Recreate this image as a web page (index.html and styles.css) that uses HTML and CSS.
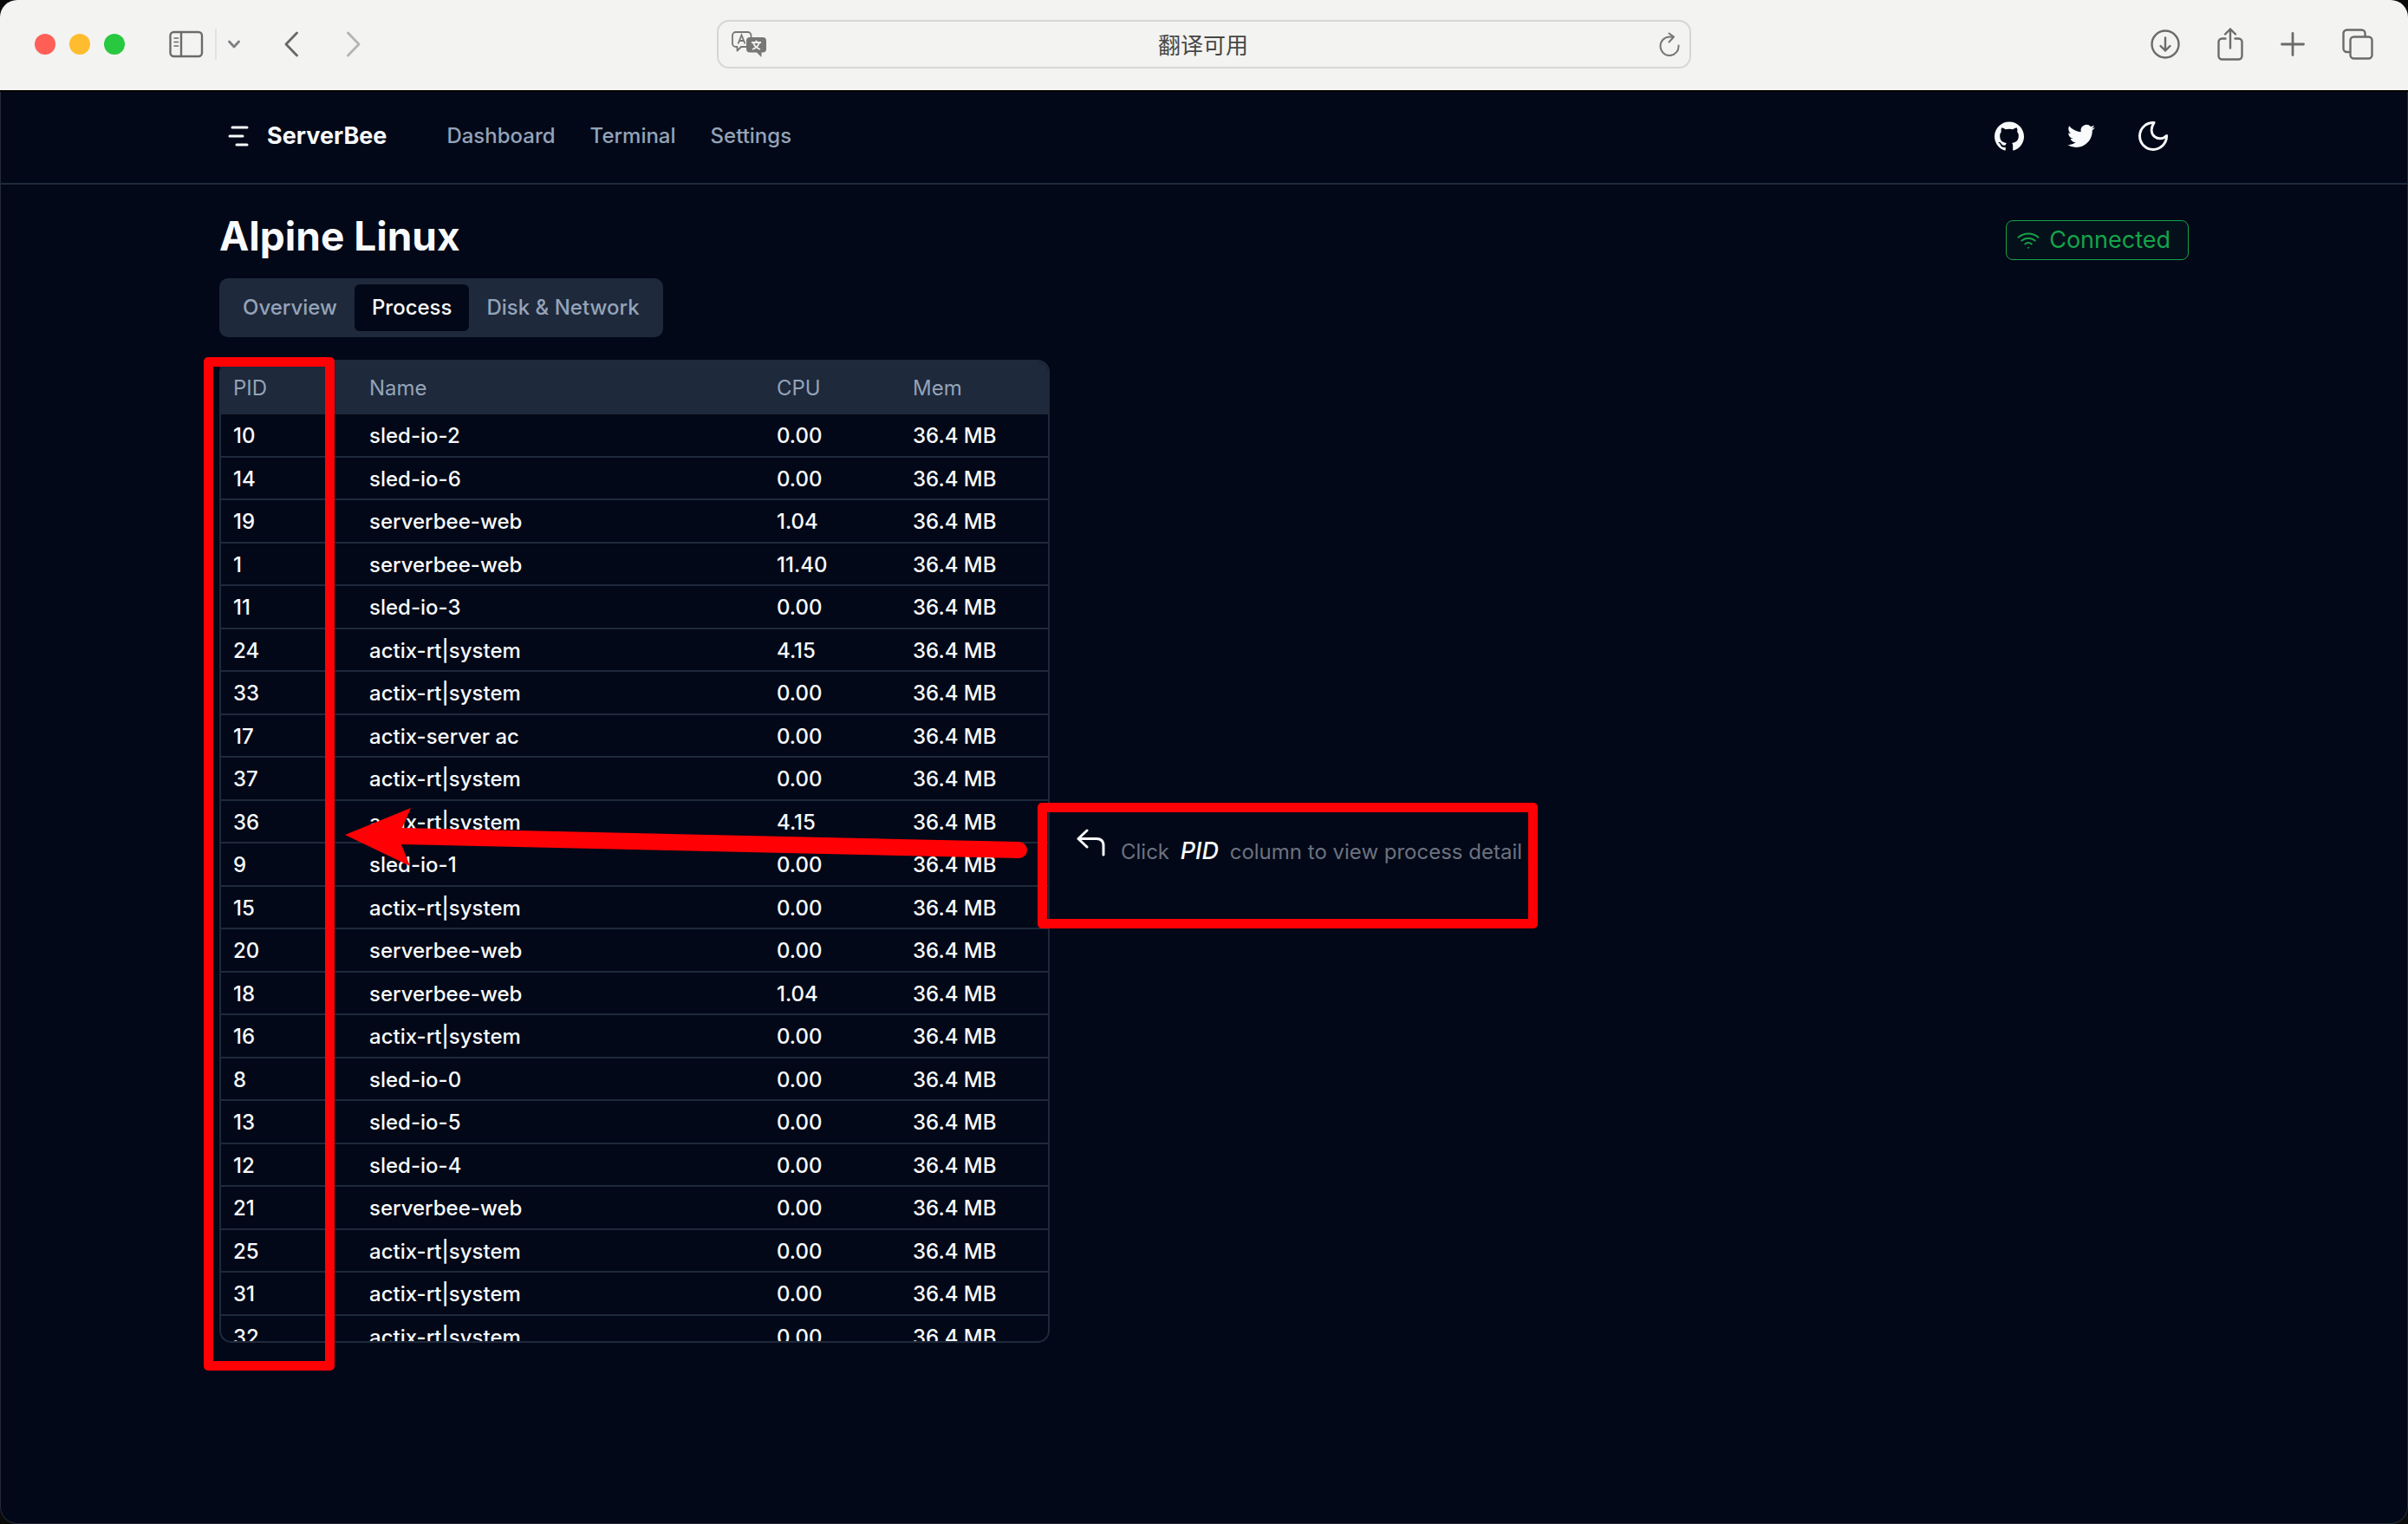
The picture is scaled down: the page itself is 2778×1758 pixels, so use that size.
FILE: index.html
```html
<!DOCTYPE html>
<html lang="en">
<head>
<meta charset="utf-8">
<title>ServerBee</title>
<link rel="stylesheet" href="styles.css">
</head>
<body>
<div class="window">
  <header class="toolbar">
    <div class="toolbar-start">
      <div class="lights">
        <button class="light light-close" aria-label="Close"></button>
        <button class="light light-min" aria-label="Minimize"></button>
        <button class="light light-max" aria-label="Zoom"></button>
      </div>
      <div class="sidebar-tools">
        <button class="tool" aria-label="Sidebar"><svg width="40" height="32" viewBox="0 0 40 32" fill="none" stroke="#6b6b69" stroke-width="2.4" stroke-linecap="round"><rect x="1.5" y="2" width="36.5" height="28" rx="4"/><path d="M14 2v28"/><path d="M6 9h4.500M6 13.500h4.500M6 18h4.500" stroke-width="1.600"/></svg></button>
        <span class="tool-divider"></span>
        <button class="tool" aria-label="Tab groups"><svg width="14" height="12" viewBox="0 0 14 12" fill="none" stroke="#7f7f82" stroke-width="2.800" stroke-linecap="round" stroke-linejoin="round"><path d="M1.500 3 7 9l5.500-6"/></svg></button>
      </div>
      <div class="history">
        <button class="tool" aria-label="Back"><svg width="16" height="30" viewBox="0 0 16 30" fill="none" stroke="#686866" stroke-width="2.800" stroke-linecap="round" stroke-linejoin="round"><path d="M14.500 2 2 15l12.500 13"/></svg></button>
        <button class="tool" aria-label="Forward"><svg width="16" height="30" viewBox="0 0 16 30" fill="none" stroke="#b4b4b2" stroke-width="2.800" stroke-linecap="round" stroke-linejoin="round"><path d="M1.500 2 14 15 1.500 28"/></svg></button>
      </div>
    </div>
    <div class="address">
      <button class="tool" aria-label="Translate"><svg width="40" height="30" viewBox="0 0 40 30" fill="none"><path d="M22.500 7V5a4 4 0 0 0-4-4H5a4 4 0 0 0-4 4v9a4 4 0 0 0 4 4h1.500v4.500L11 18h6" stroke="#777775" stroke-width="1.800" stroke-linejoin="round"/><path d="M7.500 14.500 11.500 4.500l4 10M9 11h5" stroke="#777775" stroke-width="1.800"/><path d="M21 7h15a4 4 0 0 1 4 4v9.500a4 4 0 0 1-4 4h-1.500V30L29 24.500h-8a4 4 0 0 1-4-4V11a4 4 0 0 1 4-4z" fill="#777775"/><path d="M23 13h11M28.500 10.500V13M32 13c-1 4-4 6.500-8 8M25 13c1 4 4 6.500 8 8" stroke="#f3f3f1" stroke-width="1.800"/></svg></button>
      <input class="address-input" type="text" aria-label="Address" value="翻译可用">
      <button class="tool" aria-label="Reload"><svg width="24" height="28" viewBox="0 0 24 28" fill="none" stroke="#777775" stroke-width="2" stroke-linecap="round" stroke-linejoin="round"><path d="M22.500 15.500A10.500 10.800 0 1 1 12 5.500h4M11.500 1.500l5.500 4-5.500 6"/></svg></button>
    </div>
    <div class="toolbar-end">
      <button class="tool" aria-label="Downloads"><svg width="34" height="34" viewBox="0 0 34 34" fill="none" stroke="#6b6b69" stroke-width="2.400" stroke-linecap="round" stroke-linejoin="round"><circle cx="17" cy="17" r="15.500"/><path d="M17 9.500v15M11.500 19l5.500 5.500 5.500-5.500"/></svg></button>
      <button class="tool" aria-label="Share"><svg width="30" height="38" viewBox="0 0 30 38" fill="none" stroke="#6b6b69" stroke-width="2.400" stroke-linecap="round" stroke-linejoin="round"><path d="M9.500 12.500h-4a4 4 0 0 0-4 4v16a4 4 0 0 0 4 4h19a4 4 0 0 0 4-4v-16a4 4 0 0 0-4-4h-4M15 23.500v-22M9 7.500l6-6 6 6"/></svg></button>
      <button class="tool" aria-label="New tab"><svg width="28" height="28" viewBox="0 0 28 28" fill="none" stroke="#6b6b69" stroke-width="2.800" stroke-linecap="round"><path d="M14 1.500v25M1.500 14h25"/></svg></button>
      <button class="tool" aria-label="Tab overview"><svg width="36" height="36" viewBox="0 0 36 36" fill="none" stroke="#6b6b69" stroke-width="2.400"><rect x="9.500" y="9.500" width="25" height="25" rx="4"/><path d="M9 27H5.500a4 4 0 0 1-4-4V5.500a4 4 0 0 1 4-4h17a4 4 0 0 1 4 4V9"/></svg></button>
    </div>
  </header>

  <div class="navbar">
    <div class="container navbar-inner">
      <a class="brand" href="#"><svg width="24" height="26" viewBox="0 0 24 26" fill="none" stroke="#f8fafc" stroke-width="3" stroke-linecap="round"><path d="M5 3h17M2 13h15M10 23h12"/></svg><span>ServerBee</span></a>
      <nav class="nav-links">
        <a href="#">Dashboard</a>
        <a href="#">Terminal</a>
        <a href="#">Settings</a>
      </nav>
      <div class="nav-icons">
        <a href="#" aria-label="GitHub"><svg width="34" height="34" viewBox="0 0 24 24" fill="#f8fafc"><path d="M12 .297c-6.630 0-12 5.373-12 12 0 5.303 3.438 9.800 8.205 11.385.6.113.82-.258.82-.577 0-.285-.01-1.040-.015-2.040-3.338.724-4.042-1.610-4.042-1.610C4.422 18.070 3.633 17.700 3.633 17.700c-1.087-.744.084-.729.084-.729 1.205.084 1.838 1.236 1.838 1.236 1.070 1.835 2.809 1.305 3.495.998.108-.776.417-1.305.76-1.605-2.665-.3-5.466-1.332-5.466-5.930 0-1.310.465-2.380 1.235-3.220-.135-.303-.54-1.523.105-3.176 0 0 1.005-.322 3.300 1.230.96-.267 1.980-.399 3-.405 1.020.006 2.040.138 3 .405 2.280-1.552 3.285-1.230 3.285-1.230.645 1.653.24 2.873.12 3.176.765.840 1.230 1.910 1.230 3.220 0 4.610-2.805 5.625-5.475 5.920.42.360.81 1.096.81 2.220 0 1.606-.015 2.896-.015 3.286 0 .315.21.690.825.570C20.565 22.092 24 17.592 24 12.297c0-6.627-5.373-12-12-12"/></svg></a>
        <a href="#" aria-label="Twitter"><svg width="32" height="32" viewBox="0 0 24 24" fill="#f8fafc"><path d="M23.953 4.570a10 10 0 01-2.825.775 4.958 4.958 0 002.163-2.723c-.951.555-2.005.959-3.127 1.184a4.920 4.920 0 00-8.384 4.482C7.690 8.095 4.067 6.130 1.640 3.162a4.822 4.822 0 00-.666 2.475c0 1.710.87 3.213 2.188 4.096a4.904 4.904 0 01-2.228-.616v.060a4.923 4.923 0 003.946 4.827 4.996 4.996 0 01-2.212.085 4.936 4.936 0 004.604 3.417 9.867 9.867 0 01-6.102 2.105c-.39 0-.779-.023-1.170-.067a13.995 13.995 0 007.557 2.209c9.053 0 13.998-7.496 13.998-13.985 0-.21 0-.42-.015-.630A9.935 9.935 0 0024 4.590z"/></svg></a>
        <button class="tool" aria-label="Toggle theme"><svg width="34" height="34" viewBox="0 0 34 34" fill="none" stroke="#f8fafc" stroke-width="3" stroke-linejoin="round"><path d="M18 1.500A15.500 15.500 0 1 0 32.500 16.500C24 25 9 16 18 1.500z"/></svg></button>
      </div>
    </div>
  </div>

  <main class="container main">
    <div class="title-row">
      <h1>Alpine Linux</h1>
      <div class="status"><svg width="26" height="26" viewBox="0 0 24 24" fill="none" stroke="#16a34a" stroke-width="1.800" stroke-linecap="round"><path d="M5 12.550a11 11 0 0 1 14.080 0M1.420 9a16 16 0 0 1 21.160 0M8.530 16.110a6 6 0 0 1 6.950 0M12 20h.01"/></svg><span>Connected</span></div>
    </div>

    <div class="tabs" role="tablist">
      <button class="tab" role="tab" aria-selected="false">Overview</button>
      <button class="tab tab-active" role="tab" aria-selected="true">Process</button>
      <button class="tab" role="tab" aria-selected="false">Disk &amp; Network</button>
    </div>

    <div class="process">
      <div class="table-wrap">
        <table>
          <colgroup><col class="col-pid"><col class="col-name"><col class="col-cpu"><col class="col-mem"></colgroup>
          <thead><tr><th>PID</th><th>Name</th><th>CPU</th><th>Mem</th></tr></thead>
          <tbody>
            <tr><td>10</td><td>sled-io-2</td><td>0.00</td><td>36.4 MB</td></tr>
            <tr><td>14</td><td>sled-io-6</td><td>0.00</td><td>36.4 MB</td></tr>
            <tr><td>19</td><td>serverbee-web</td><td>1.04</td><td>36.4 MB</td></tr>
            <tr><td>1</td><td>serverbee-web</td><td>11.40</td><td>36.4 MB</td></tr>
            <tr><td>11</td><td>sled-io-3</td><td>0.00</td><td>36.4 MB</td></tr>
            <tr><td>24</td><td>actix-rt|system</td><td>4.15</td><td>36.4 MB</td></tr>
            <tr><td>33</td><td>actix-rt|system</td><td>0.00</td><td>36.4 MB</td></tr>
            <tr><td>17</td><td>actix-server ac</td><td>0.00</td><td>36.4 MB</td></tr>
            <tr><td>37</td><td>actix-rt|system</td><td>0.00</td><td>36.4 MB</td></tr>
            <tr><td>36</td><td>actix-rt|system</td><td>4.15</td><td>36.4 MB</td></tr>
            <tr><td>9</td><td>sled-io-1</td><td>0.00</td><td>36.4 MB</td></tr>
            <tr><td>15</td><td>actix-rt|system</td><td>0.00</td><td>36.4 MB</td></tr>
            <tr><td>20</td><td>serverbee-web</td><td>0.00</td><td>36.4 MB</td></tr>
            <tr><td>18</td><td>serverbee-web</td><td>1.04</td><td>36.4 MB</td></tr>
            <tr><td>16</td><td>actix-rt|system</td><td>0.00</td><td>36.4 MB</td></tr>
            <tr><td>8</td><td>sled-io-0</td><td>0.00</td><td>36.4 MB</td></tr>
            <tr><td>13</td><td>sled-io-5</td><td>0.00</td><td>36.4 MB</td></tr>
            <tr><td>12</td><td>sled-io-4</td><td>0.00</td><td>36.4 MB</td></tr>
            <tr><td>21</td><td>serverbee-web</td><td>0.00</td><td>36.4 MB</td></tr>
            <tr><td>25</td><td>actix-rt|system</td><td>0.00</td><td>36.4 MB</td></tr>
            <tr><td>31</td><td>actix-rt|system</td><td>0.00</td><td>36.4 MB</td></tr>
            <tr><td>32</td><td>actix-rt|system</td><td>0.00</td><td>36.4 MB</td></tr>
          </tbody>
        </table>
      </div>
      <div class="detail">
        <svg class="hint-icon" width="34" height="32" viewBox="0 0 34 32" fill="none" stroke="#f8fafc" stroke-width="3" stroke-linecap="round" stroke-linejoin="round"><path d="M12 2 2 11.500 12 21M2 11.500h21q8 0 8 8V30"/></svg>
        <p class="hint">Click <em>PID</em> column to view process detail</p>
      </div>
      <div class="mark mark-pid"></div>
      <div class="mark mark-hint"></div>
      <svg class="mark-arrow" width="788" height="68" viewBox="0 0 788 68" fill="#ff0004"><path d="M0 32 76 1 66 24 778 40a9.500 9.500 0 0 1-1 19L65 43 75 68z"/></svg>
    </div>
  </main>
</div>
</body>
</html>
```
FILE: styles.css
```css
* {
  box-sizing: border-box;
}

body {
  margin: 0;
  background: #0a0a0a;
  font-family: Inter, "Noto Sans CJK SC", sans-serif;
  font-size: 24px;
  line-height: 34px;
  color: #f8fafc;
}

button,
input {
  margin: 0;
  padding: 0;
  border: 0;
  background: none;
  font: inherit;
  color: inherit;
}

a {
  color: inherit;
  text-decoration: none;
}

svg {
  display: block;
}

.window {
  min-height: 100vh;
  overflow: hidden;
  border-radius: 20px;
  background: #020817;
  box-shadow: inset 0 0 0 1px #252a36;
}

/* Browser toolbar */
.toolbar {
  display: grid;
  grid-template-columns: 1fr minmax(0, 1124px) 1fr;
  align-items: center;
  height: 106px;
  padding: 0 40px 2px;
  border-bottom: 2px solid #000;
  background: #f3f3f1;
}

.toolbar-start,
.toolbar-end,
.lights,
.sidebar-tools,
.history {
  display: flex;
  align-items: center;
}

.toolbar-start {
  gap: 51px;
}

.lights {
  gap: 16px;
}

.light {
  width: 24px;
  height: 24px;
  border-radius: 50%;
}

.light-close {
  background: #ff5f57;
}

.light-min {
  background: #febc2e;
}

.light-max {
  background: #28c840;
}

.sidebar-tools {
  gap: 13px;
}

.tool-divider {
  width: 2px;
  height: 36px;
  background: #e2e2e0;
}

.history {
  gap: 56px;
}

.address {
  display: flex;
  align-items: center;
  height: 56px;
  padding: 0 11px 0 15px;
  border: 2px solid #d6d6d3;
  border-radius: 14px;
}

.address-input {
  flex: 1;
  min-width: 0;
  padding-right: 22px;
  font-family: "Noto Sans CJK SC", sans-serif;
  font-size: 26px;
  text-align: center;
  color: #474746;
}

.toolbar-end {
  justify-content: flex-end;
  gap: 43px;
}

/* Site navigation */
.container {
  max-width: 2272px;
  margin: 0 auto;
}

.navbar {
  border-bottom: 2px solid #1e293b;
}

.navbar-inner {
  display: flex;
  align-items: center;
  height: 105px;
  padding: 0 24px 3px 10px;
}

.brand {
  display: flex;
  align-items: center;
  gap: 21px;
  font-size: 27px;
  font-weight: 700;
}

.nav-links {
  display: flex;
  gap: 40px;
  margin-left: 69px;
  font-weight: 500;
  color: #94a3b8;
}

.nav-icons {
  display: flex;
  align-items: center;
  gap: 50px;
  margin-left: auto;
}

/* Page */
.main {
  padding: 36px 0 180px;
}

.title-row {
  display: flex;
  align-items: flex-start;
  justify-content: space-between;
  height: 56px;
}

h1 {
  margin: 0;
  font-size: 46px;
  line-height: 46px;
  font-weight: 700;
}

.status {
  display: flex;
  align-self: center;
  align-items: center;
  gap: 11px;
  height: 46px;
  padding: 0 20px 0 12px;
  border: 1px solid #16a34a;
  border-radius: 8px;
  background: #04111a;
  font-size: 27px;
  color: #16a34a;
}

.tabs {
  display: inline-flex;
  margin-top: 16px;
  padding: 7px;
  border-radius: 10px;
  background: #1e293b;
}

.tab {
  height: 54px;
  padding: 0 20px;
  border-radius: 6px;
  font-weight: 500;
  color: #94a3b8;
}

.tab-active {
  background: #020817;
  color: #f8fafc;
}

.process {
  position: relative;
  display: grid;
  grid-template-columns: 958px 1fr;
  gap: 31px;
  margin-top: 26px;
}

.table-wrap {
  height: 1134px;
  overflow: hidden;
  border: 2px solid #1e293b;
  border-radius: 14px;
}

table {
  width: 100%;
  table-layout: fixed;
  border-collapse: separate;
  border-spacing: 0;
}

.col-pid,
.col-cpu {
  width: 157px;
}

.col-name {
  width: 470px;
}

th,
td {
  padding: 0 14px;
  text-align: left;
}

th {
  height: 61px;
  background: #1e293b;
  font-weight: 400;
  color: #94a3b8;
}

td {
  height: 50px;
  padding-top: 2px;
  border-bottom: 2px solid #1e293b;
  font-weight: 500;
}

tr:nth-child(even) td {
  height: 49px;
}

.detail {
  display: flex;
  align-items: center;
  gap: 17px;
}

.hint-icon {
  margin-bottom: 20px;
}

.hint {
  margin: 0;
  color: #6b7280;
}

.hint em {
  margin: 0 6px;
  font-size: 27px;
  font-weight: 500;
  color: #f8fafc;
}

/* Annotations over the page */
.mark {
  position: absolute;
  border: 11px solid #ff0004;
  border-radius: 5px;
}

.mark-pid {
  top: -3px;
  left: -18px;
  width: 151px;
  height: 1169px;
}

.mark-hint {
  top: 511px;
  left: 944px;
  width: 577px;
  height: 145px;
}

.mark-arrow {
  position: absolute;
  top: 516px;
  left: 145px;
}
```
